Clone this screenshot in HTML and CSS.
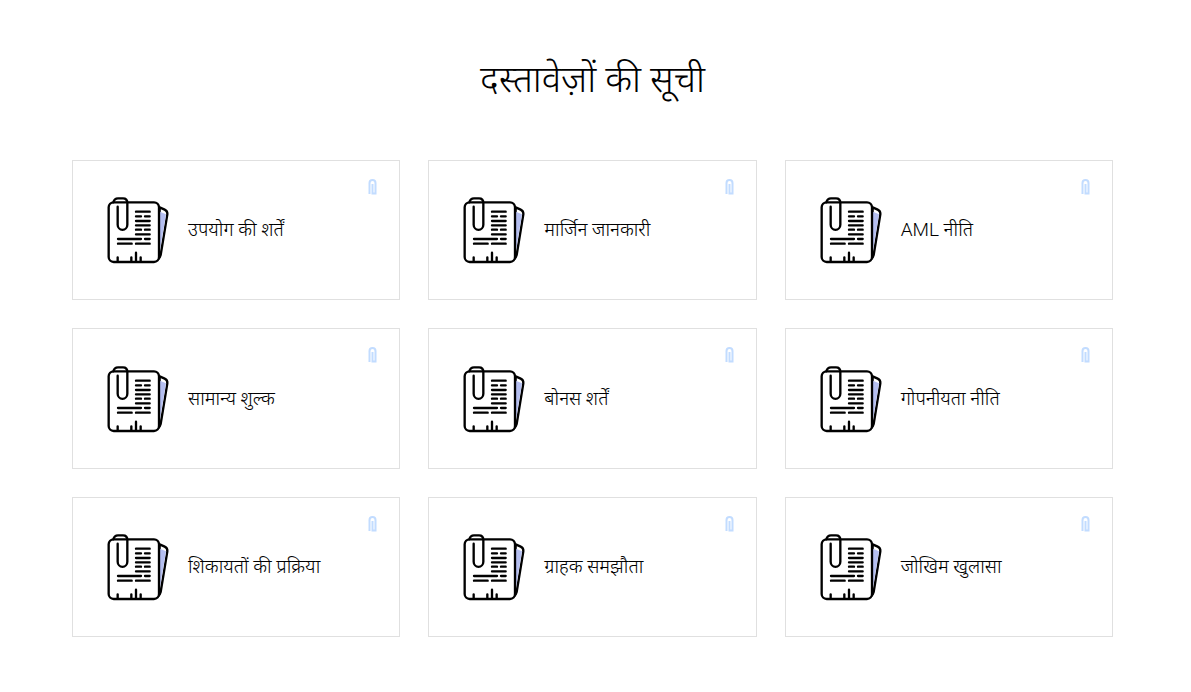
FILE: index.html
```
<!DOCTYPE html>
<html lang="hi">
<head>
<meta charset="utf-8">
<meta name="viewport" content="width=device-width, initial-scale=1">
<title>दस्तावेज़ों की सूची</title>
<link rel="stylesheet" href="styles.css">
</head>
<body>
<svg class="sprite" aria-hidden="true">
  <symbol id="doc" viewBox="36 33 186 204">
    <path d="M194 67L209 74Q218 78 217 88L197 210Q195 218 190 222Z" fill="#fff" stroke="#000" stroke-width="7" stroke-linejoin="round"/>
    <path d="M195 80L213 88L195 196Z" fill="#b4bef0"/>
    <rect x="41" y="52" width="151" height="179" rx="15" fill="#fff" stroke="#000" stroke-width="7"/>
    <g fill="none" stroke="#000" stroke-width="7" stroke-linecap="round">
      <path d="M55 52Q58 40 69 40H84Q97 40 97 54V119A14 15 0 0 1 68 119V65"/>
      <path d="M123 80H164M123 94H138M150 94H164M123 108H164M123 121H164M123 134H138M150 134H164M123 148H164M69 162H138M150 162H164M69 176H110M123 176H164"/>
      <path d="M68 217V229M109 217V229M123 203V229M137 217V229"/>
    </g>
  </symbol>
  <symbol id="clip" viewBox="0 0 9 16">
    <path d="M1.500 15V4A3 3 0 0 1 7.500 4V14.500H4.500V5" fill="none" stroke="#c2dcff" stroke-width="2"/>
  </symbol>
</svg>
<main class="documents">
  <h1 class="title">दस्तावेज़ों की सूची</h1>
  <div class="grid">
    <a class="card" href="#"><svg class="doc"><use href="#doc"/></svg><span>उपयोग की शर्तें</span><svg class="clip"><use href="#clip"/></svg></a>
    <a class="card" href="#"><svg class="doc"><use href="#doc"/></svg><span>मार्जिन जानकारी</span><svg class="clip"><use href="#clip"/></svg></a>
    <a class="card" href="#"><svg class="doc"><use href="#doc"/></svg><span>AML नीति</span><svg class="clip"><use href="#clip"/></svg></a>
    <a class="card" href="#"><svg class="doc"><use href="#doc"/></svg><span>सामान्य शुल्क</span><svg class="clip"><use href="#clip"/></svg></a>
    <a class="card" href="#"><svg class="doc"><use href="#doc"/></svg><span>बोनस शर्तें</span><svg class="clip"><use href="#clip"/></svg></a>
    <a class="card" href="#"><svg class="doc"><use href="#doc"/></svg><span>गोपनीयता नीति</span><svg class="clip"><use href="#clip"/></svg></a>
    <a class="card" href="#"><svg class="doc"><use href="#doc"/></svg><span>शिकायतों की प्रक्रिया</span><svg class="clip"><use href="#clip"/></svg></a>
    <a class="card" href="#"><svg class="doc"><use href="#doc"/></svg><span>ग्राहक समझौता</span><svg class="clip"><use href="#clip"/></svg></a>
    <a class="card" href="#"><svg class="doc"><use href="#doc"/></svg><span>जोखिम खुलासा</span><svg class="clip"><use href="#clip"/></svg></a>
  </div>
</main>
</body>
</html>
```
FILE: styles.css
```
* { box-sizing: border-box; }

body {
  margin: 0;
  background: #fff;
  color: #000;
  font-family: Roboto, "Noto Sans", sans-serif;
}

.sprite { display: none; }

.documents { padding: 54px 78px 54px 72px; }

.title {
  margin: 0 0 54px;
  font-size: 37px;
  line-height: 52px;
  font-weight: 300;
  text-align: center;
}

.grid {
  display: grid;
  grid-template-columns: repeat(3, 1fr);
  gap: 28px;
}

.card {
  position: relative;
  display: flex;
  align-items: center;
  gap: 19px;
  aspect-ratio: 187 / 80;
  padding: 0 34px;
  border: 1px solid #e0e0e0;
  color: inherit;
  font-size: 19px;
  font-weight: 300;
  line-height: 24px;
  text-decoration: none;
}

.doc {
  flex: none;
  width: 62px;
  height: 68px;
}

.clip {
  position: absolute;
  top: 18px;
  right: 22px;
  width: 9px;
  height: 16px;
}
```
